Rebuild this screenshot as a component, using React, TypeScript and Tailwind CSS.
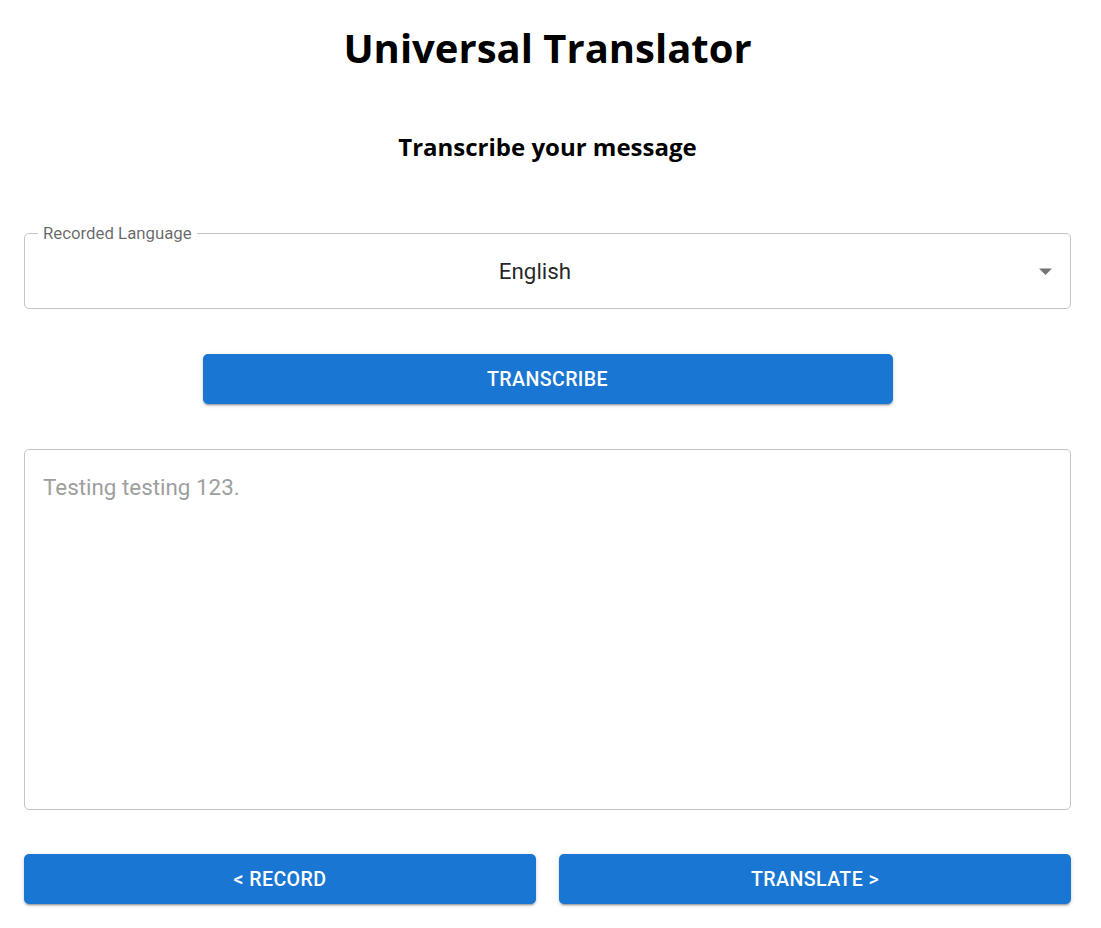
import React from 'react';

const roboto = { fontFamily: 'Roboto, "Liberation Sans", sans-serif' };

const ActionButton: React.FC<{ label: string; className?: string }> = ({ label, className }) => (
  <button
    className={`h-[50px] rounded-[5px] bg-[#1976d2] pt-[2px] text-white text-[19.6px] font-medium uppercase tracking-[0.4px] shadow-[0px_3px_1px_-2px_rgba(0,0,0,0.2),0px_2px_2px_0px_rgba(0,0,0,0.14),0px_1px_5px_0px_rgba(0,0,0,0.12)] ${className ?? ''}`}
    style={roboto}
  >
    {label}
  </button>
);

export default function App() {
  return (
    <div className="min-h-[928px] w-full bg-white pl-[24px] pr-[30px]">
      <div className="flex flex-col items-center">
        <h1
          className="mt-[22px] text-[40px] leading-[52px] font-bold text-black"
          style={{ fontFamily: '"Open Sans", "Noto Sans", sans-serif' }}
        >
          Universal Translator
        </h1>
        <h2
          className="mt-[57px] text-[24px] leading-[32px] font-bold text-black"
          style={{ fontFamily: '"Open Sans", "Noto Sans", sans-serif' }}
        >
          Transcribe your message
        </h2>
      </div>

      {/* language select */}
      <div className="relative mt-[70px] h-[76px] w-full rounded-[5px] border border-[#c4c4c4]" style={roboto}>
        <span className="absolute -top-[12px] left-[13px] bg-white px-[5px] text-[16.8px] leading-[22px] text-[rgba(0,0,0,0.6)]">
          Recorded Language
        </span>
        <div className="flex h-full items-center pl-[18px] pr-[43px] pt-[2px]">
          <span className="w-full text-center text-[22.4px] text-[rgba(0,0,0,0.87)]">English</span>
        </div>
        <svg
          className="absolute right-[9px] top-1/2 -translate-y-1/2 text-[rgba(0,0,0,0.54)]"
          width="31"
          height="31"
          viewBox="0 0 24 24"
          fill="currentColor"
        >
          <path d="M7 10l5 5 5-5z" />
        </svg>
      </div>

      <div className="mt-[45px] flex justify-center">
        <ActionButton label="Transcribe" className="w-[690px]" />
      </div>

      {/* transcription box */}
      <div
        className="mt-[45px] h-[361px] w-full rounded-[5px] border border-[#c4c4c4] px-[18px] pt-[21px] text-[22.4px] leading-[32px] text-[#9e9e9e]"
        style={roboto}
      >
        Testing testing 123.
      </div>

      <div className="mt-[44px] flex gap-[23px]">
        <ActionButton label="< Record" className="flex-1" />
        <ActionButton label="Translate >" className="flex-1" />
      </div>
    </div>
  );
}
